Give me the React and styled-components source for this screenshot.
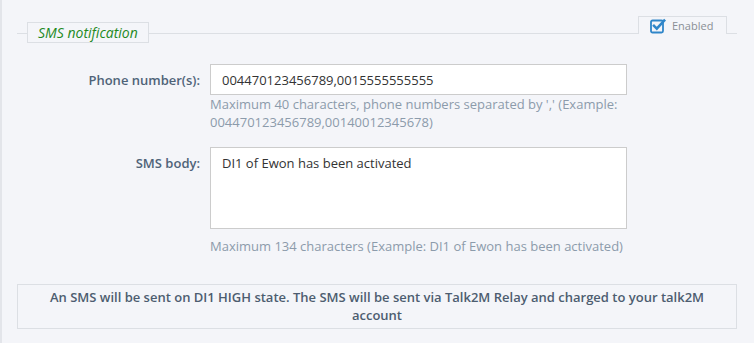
import React from "react"
import styled, { createGlobalStyle } from "styled-components"

const GlobalStyle = createGlobalStyle`
  html, body {
    margin: 0;
    padding: 0;
    background: #f4f5f9;
  }
  body {
    font-family: "Open Sans", "Liberation Sans", sans-serif;
    font-size: 13px;
  }
`

const Page = styled.div`
  width: 754px;
  height: 343px;
  box-sizing: border-box;
  border-left: 2px solid #e3e5ea;
  padding-top: 16px;
  overflow: hidden;
`

const Header = styled.div`
  position: relative;
  display: flex;
  align-items: flex-start;
  margin: 0 17px 0 15px;
  height: 27px;
  &::before {
    content: "";
    position: absolute;
    left: 0;
    right: 0;
    top: 17px;
    height: 1px;
    background: #dcdfe4;
  }
`

const Legend = styled.div`
  position: relative;
  margin: 6px 0 0 10px;
  height: 21px;
  box-sizing: border-box;
  padding: 0 10px;
  border: 1px solid #dcdfe4;
  background: #f4f5f9;
  color: #1f8a1f;
  font-style: italic;
  font-size: 14px;
  line-height: 19px;
`

const Tab = styled.div`
  position: relative;
  margin: 0 10px 0 auto;
  width: 89px;
  height: 18px;
  box-sizing: border-box;
  border: 1px solid #dcdfe4;
  border-bottom: none;
  background: #f4f5f9;
  display: flex;
  align-items: center;
  padding-left: 11px;
  gap: 6px;
  color: #8a8f96;
  font-size: 11px;
`

const Form = styled.div`
  display: grid;
  grid-template-columns: 198px 417px;
  column-gap: 10px;
  margin-top: 21px;
`

const Label = styled.div`
  text-align: right;
  font-weight: 600;
  color: #4f6378;
  padding-top: 7px;
  line-height: 18px;
`

const Field = styled.div`
  margin-bottom: ${p => p.$gap || 0}px;
`

const TextInput = styled.div`
  height: 31px;
  box-sizing: border-box;
  background: #fff;
  border: 1px solid #ccc;
  padding: 6px 11px;
  color: #333;
  line-height: 18px;
`

const TextArea = styled(TextInput)`
  height: 82px;
`

const Help = styled.div`
  color: #8c9bab;
  line-height: 18px;
  margin-top: ${p => p.$top || 0}px;
`

const Notice = styled.div`
  margin: 29px 17px 0 15px;
  border: 1px solid #dcdfe4;
  padding: 3px 20px 4px;
  text-align: center;
  font-weight: 600;
  color: #4d5d70;
  line-height: 18px;
`

const CheckIcon = () => (
  <svg width="16" height="16" viewBox="0 0 16 16">
    <rect x="1" y="2.5" width="12" height="12" rx="1.5" fill="none" stroke="#2f86c9" strokeWidth="1.8" />
    <path d="M4 7.8 L6.8 10.6 L14.2 2.6" fill="none" stroke="#2f86c9" strokeWidth="2.6" strokeLinecap="square" />
  </svg>
)

export default function App() {
  return (
    <>
      <GlobalStyle />
      <Page>
        <Header>
          <Legend>SMS notification</Legend>
          <Tab>
            <CheckIcon />
            Enabled
          </Tab>
        </Header>
        <Form>
          <Label>Phone number(s):</Label>
          <Field $gap={16}>
            <TextInput>004470123456789,0015555555555</TextInput>
            <Help>
              Maximum 40 characters, phone numbers separated by ',' (Example: 004470123456789,00140012345678)
            </Help>
          </Field>
          <Label>SMS body:</Label>
          <Field>
            <TextArea>DI1 of Ewon has been activated</TextArea>
            <Help $top={8}>Maximum 134 characters (Example: DI1 of Ewon has been activated)</Help>
          </Field>
        </Form>
        <Notice>
          An SMS will be sent on DI1 HIGH state. The SMS will be sent via Talk2M Relay and charged to your talk2M account
        </Notice>
      </Page>
    </>
  )
}
